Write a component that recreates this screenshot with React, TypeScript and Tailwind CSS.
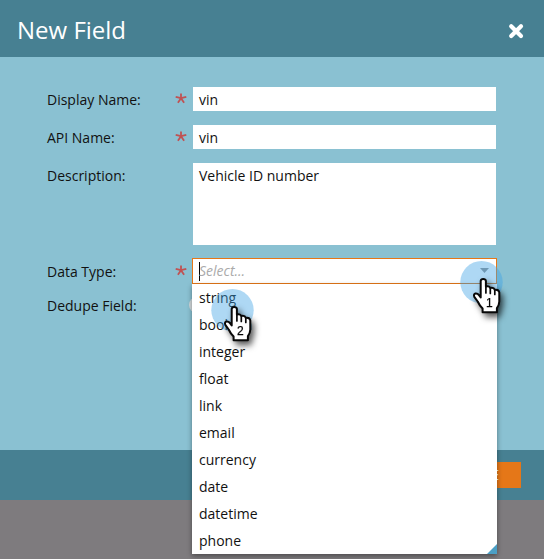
import React from "react";

function Asterisk() {
  return (
    <svg className="mt-[6px] h-3 w-3" viewBox="0 0 12 12" fill="none">
      <path d="M6 5.2V.4M6 5.2L.7 3.9M6 5.2l5.3-1.3M6 5.2L2.9 9.8M6 5.2l3.1 4.6" stroke="#c05253" strokeWidth="1.8" />
    </svg>
  );
}

function Label({ text, required }: { text: string; required?: boolean }) {
  return (
    <div className="flex w-[146px] shrink-0">
      <span className="w-[128px] pt-[3px] leading-5">{text}</span>
      {required && <Asterisk />}
    </div>
  );
}

function Pointer({ n }: { n: string }) {
  return (
    <svg className="h-[70px] w-[60px] overflow-visible" viewBox="0 0 60 70">
      <circle cx="21.5" cy="21.2" r="21.2" fill="#3fa3e4" fillOpacity=".42" />
      <g style={{ filter: "drop-shadow(3px 4px 3px rgba(0,0,0,.65))" }}>
        <path
          d="M20.7 36.5V19.8Q21 18 23.2 18Q25.6 18 25.9 19.8V25.4Q29.6 24.6 30.3 27Q33.9 26.2 34.8 28.8Q38.6 28.2 39.3 31.4V40.5Q39.2 44 36.9 47.2V51.2H22.6V47.5Q19.5 44.5 17.7 40.5L14.3 35.8Q13.3 33.2 15.4 32.5Q17.5 32.1 19 34.2Z"
          fill="white"
          stroke="#080808"
          strokeWidth="2"
          strokeLinejoin="round"
        />
        <path d="M25.9 25v7M30.3 27v5.5M34.8 28.8v4.7" stroke="#080808" strokeWidth="1.7" strokeLinecap="round" />
        <text x="29.3" y="45.8" textAnchor="middle" className="font-['Liberation_Sans'] text-[12px]" fill="#050505" stroke="#050505" strokeWidth=".25">
          {n}
        </text>
      </g>
    </svg>
  );
}

const types = ["string", "boolean", "integer", "float", "link", "email", "currency", "date", "datetime", "phone"];

export default function App() {
  return (
    <div className="relative flex h-[559px] w-[544px] flex-col overflow-hidden bg-[#7e7b7e] font-['Open_Sans',sans-serif] text-[14px] text-[#111]">
      <header className="flex h-[57px] shrink-0 items-center justify-between bg-[#478092] pr-5 pl-[17px] text-white">
        <h1 className="pt-[3px] text-[24px] leading-8">New Field</h1>
        <svg className="mt-[5px] h-4 w-4" viewBox="0 0 16 16">
          <path d="M3.2 3.2l9.8 9.8M13 3.2l-9.8 9.8" stroke="white" strokeWidth="4.2" strokeLinecap="round" />
        </svg>
      </header>
      <main className="flex h-[393px] shrink-0 flex-col bg-[#8ac1d2] pt-[30px] pl-[47px]">
        <div className="mb-[14px] flex h-6">
          <Label text="Display Name:" required />
          <div className="w-[303px] bg-white pt-[3px] pl-[6px] leading-5">vin</div>
        </div>
        <div className="mb-[14px] flex h-6">
          <Label text="API Name:" required />
          <div className="w-[303px] bg-white pt-[3px] pl-[6px] leading-5">vin</div>
        </div>
        <div className="mb-[13px] flex h-[82px]">
          <Label text="Description:" />
          <div className="w-[303px] bg-white pt-[3px] pl-[6px] leading-5">Vehicle ID number</div>
        </div>
        <div className="mb-[9px] flex h-[26px]">
          <div className="w-[145px] shrink-0 pt-px"><Label text="Data Type:" required /></div>
          <div className="flex w-[305px] items-center justify-between border border-[#e57718] bg-white pr-[7px] pl-[6px] text-[#aaa] italic">
            <span className="flex items-center"><i className="h-[19px] w-px bg-black" /><span className="-ml-px pb-[2px]">Select...</span></span>
            <svg className="mb-[2px] h-[5px] w-[9px]" viewBox="0 0 9 5"><path d="M0 0h9L4.5 5z" fill="#929292" /></svg>
          </div>
        </div>
        <div className="flex items-center">
          <Label text="Dedupe Field:" />
          <i className="-ml-1 h-4 w-4 rounded-full bg-[#d3dadd]" />
        </div>
      </main>
      <footer className="flex h-[50px] shrink-0 items-center justify-end bg-[#478092] pr-[23px]">
        <button className="h-[26px] w-[84px] bg-[#e57718] pr-[22px] text-right text-[14px] leading-[26px] text-white">CREATE</button>
      </footer>
      <ul className="absolute top-[284px] left-[192px] h-[270px] w-[305px] bg-white shadow-[0_2px_5px_rgba(0,0,0,0.4)]">
        {types.map((type) => (
          <li key={type} className="h-[27px] pl-[7px] leading-[27px]">{type}</li>
        ))}
        <svg className="absolute right-0 bottom-0 h-[10px] w-[10px]" viewBox="0 0 10 10"><path d="M10 0v10H0z" fill="#4b9fc5" /></svg>
      </ul>
      <div className="absolute top-[261px] left-[460px]"><Pointer n="1" /></div>
      <div className="absolute top-[289px] left-[211px]"><Pointer n="2" /></div>
    </div>
  );
}
